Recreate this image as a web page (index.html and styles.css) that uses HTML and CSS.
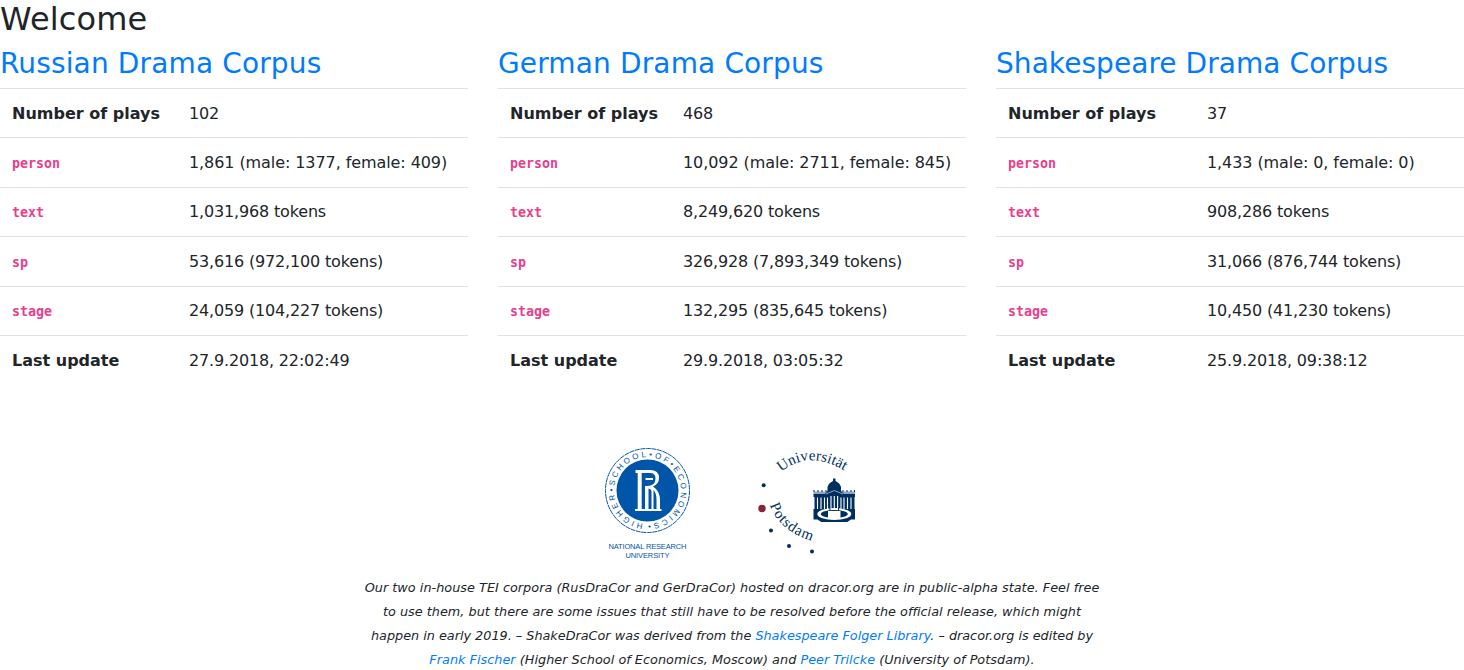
FILE: index.html
```html
<!DOCTYPE html>
<html lang="en">
<head>
<meta charset="utf-8">
<title>DraCor</title>
<link rel="stylesheet" href="styles.css">
</head>
<body>
<h1>Welcome</h1>
<main class="corpora">
  <section class="corpus">
    <h2><a href="#">Russian Drama Corpus</a></h2>
    <table>
      <colgroup><col class="label-russian"><col></colgroup>
      <tr><th>Number of plays</th><td>102</td></tr>
      <tr><th><code>person</code></th><td class="persons">1,861 (male: 1377, female: 409)</td></tr>
      <tr><th><code>text</code></th><td>1,031,968 tokens</td></tr>
      <tr><th><code>sp</code></th><td>53,616 (972,100 tokens)</td></tr>
      <tr><th><code>stage</code></th><td>24,059 (104,227 tokens)</td></tr>
      <tr><th>Last update</th><td>27.9.2018, 22:02:49</td></tr>
    </table>
  </section>
  <section class="corpus">
    <h2><a href="#">German Drama Corpus</a></h2>
    <table>
      <colgroup><col class="label-german"><col></colgroup>
      <tr><th>Number of plays</th><td>468</td></tr>
      <tr><th><code>person</code></th><td class="persons">10,092 (male: 2711, female: 845)</td></tr>
      <tr><th><code>text</code></th><td>8,249,620 tokens</td></tr>
      <tr><th><code>sp</code></th><td>326,928 (7,893,349 tokens)</td></tr>
      <tr><th><code>stage</code></th><td>132,295 (835,645 tokens)</td></tr>
      <tr><th>Last update</th><td>29.9.2018, 03:05:32</td></tr>
    </table>
  </section>
  <section class="corpus">
    <h2 class="long"><a href="#">Shakespeare Drama Corpus</a></h2>
    <table>
      <colgroup><col class="label-shakespeare"><col></colgroup>
      <tr><th>Number of plays</th><td>37</td></tr>
      <tr><th><code>person</code></th><td class="persons">1,433 (male: 0, female: 0)</td></tr>
      <tr><th><code>text</code></th><td>908,286 tokens</td></tr>
      <tr><th><code>sp</code></th><td>31,066 (876,744 tokens)</td></tr>
      <tr><th><code>stage</code></th><td>10,450 (41,230 tokens)</td></tr>
      <tr><th>Last update</th><td>25.9.2018, 09:38:12</td></tr>
    </table>
  </section>
</main>
<footer>
  <div class="logos">
    <svg class="hse" width="105" height="125" viewBox="0 0 105 125">
      <defs><path id="hse-ring" d="M52.5 86.5a36 36 0 1 1 .01 0"/></defs>
      <circle cx="52.5" cy="50.5" r="42" fill="none" stroke="#0055a8" stroke-dasharray="5 .6"/>
      <circle cx="52.5" cy="50.5" r="31" fill="#0055a8"/>
      <text class="ring" dy="2.6"><textPath href="#hse-ring" startOffset="5" textLength="220">HIGHER•SCHOOL•OF•ECONOMICS•</textPath></text>
      <g fill="#fff">
        <path d="M40.500 30H55Q64 30 64 38Q64 44 58 46.500Q65 51 65 60V69H66.500V71H40V69H42.700V33H40.500Z"/>
      </g>
      <g fill="#0055a8">
        <path d="M46.700 33H55Q60.500 33 60.500 38.500Q60.500 46 52 46H50V69H46.700ZM53.500 48.500Q56 48.500 56.500 51V69H53.500ZM58.500 50Q61.500 53 61.500 60V69H58.500Z"/>
      </g>
      <path fill="#fff" d="M50.500 38H58V40H50.500Z"/>
      <text class="name" x="13.500" y="108.500" textLength="78">NATIONAL RESEARCH</text>
      <text class="name" x="30.500" y="118" textLength="44">UNIVERSITY</text>
    </svg>
    <svg class="potsdam" width="115" height="115" viewBox="0 0 115 115">
      <defs>
        <path id="up-top" d="M31 27Q60 3 98 28"/>
        <path id="up-low" d="M20 60Q29 87 66 97"/>
      </defs>
      <text class="up"><textPath href="#up-top" textLength="68">Universität</textPath></text>
      <text class="up"><textPath href="#up-low" textLength="57">Potsdam</textPath></text>
      <g fill="#002f5f"><circle cx="13.700" cy="40.300" r="2"/><circle cx="21" cy="85.500" r="2"/><circle cx="39" cy="101" r="2"/><circle cx="62" cy="106.500" r="2"/></g>
      <circle cx="12" cy="63.500" r="3.700" fill="#8b2338"/>
      <path fill="#8fa5bd" d="M63.500 46.500H105V49H63.500Z"/>
      <path fill="none" stroke="#002f5f" d="M64 45v2M68 45v2M72 45v2M76 45v2M93 45v2M97 45v2M101 45v2M104.500 45v2"/>
      <path fill="#002f5f" d="M77.500 46V42Q78.500 38 83 36V33.500H85.500V36Q90 38 91 42V46L94 49H105V52H104.500V64H105V77H63.500V64H64.500V52H63.500V49H75Z"/>
      <path fill="none" stroke="#fff" stroke-width="1.100" d="M67.500 52.500V64M71 52.500V64M74.500 52.500V64M77.500 52.500V64M81 51V64M84.300 51V64M87.600 51V64M91 52.500V64M94 52.500V64M97.500 52.500V64M101 52.500V64"/>
      <path fill="none" stroke="#8fa5bd" d="M76 49L84.300 45.500L93 49"/>
      <ellipse cx="84.300" cy="69" rx="17" ry="6" fill="#fff"/>
      <ellipse cx="84.300" cy="69" rx="13.500" ry="4" fill="#002f5f"/>
      <path fill="#fff" d="M78 66H90.500V73H78Z"/>
      <path fill="#002f5f" d="M79.500 63H80.500V66H79.500ZM88 63H89V66H88Z"/>
      <path fill="#fff" d="M63 74.500H67.500L72 77.500H63ZM105.500 74.500H101L96.500 77.500H105.500Z"/>
    </svg>
  </div>
  <p class="note">Our two in-house TEI corpora (RusDraCor and GerDraCor) hosted on dracor.org are in public-alpha state. Feel free to use them, but there are some issues that still have to be resolved before the official release, which might <span class="credit">happen in early 2019. – ShakeDraCor was derived from the <a href="#">Shakespeare Folger Library</a>. – dracor.org is edited by</span> <a href="#">Frank Fischer</a> (Higher School of Economics, Moscow) and <a href="#">Peer Trilcke</a> (University of Potsdam).</p>
</footer>
</body>
</html>
```
FILE: styles.css
```css
* { box-sizing: border-box; }
body { margin: 0; overflow: hidden; background: #fff; color: #212529; font: 16px/1.5 "DejaVu Sans", sans-serif; }
h1, h2 { margin: 0 0 8px; font-weight: 400; line-height: 1.2; }
h1 { font-size: 32px; letter-spacing: .15px; }
h2 { padding-top: .6px; margin-bottom: 7.400px; font-size: 28px; letter-spacing: .14px; }
.long { letter-spacing: .06px; }
a { color: #007bff; text-decoration: none; }
.corpora { display: grid; grid-template-columns: repeat(3, 468px); gap: 30px; }
table { width: 100%; table-layout: fixed; border-collapse: collapse; }
th, td { height: 49.5px; padding: 12.500px 12px 12px; text-align: left; vertical-align: top; border-top: 1px solid #dee2e6; white-space: nowrap; }
tr:first-child > * { padding-top: 13px; padding-bottom: 11.500px; }
td { letter-spacing: -.16px; }
.persons { letter-spacing: -.08px; }
.label-russian { width: 177px; }
.label-german { width: 173px; }
.label-shakespeare { width: 199px; }
code { font: 700 13.300px "DejaVu Sans Mono", monospace; color: #e83e8c; }
.logos { display: flex; gap: 50px; padding-left: 595px; margin-top: 55px; height: 125px; }
.potsdam { margin-top: 5px; }
.ring { font: 8px "Liberation Sans", sans-serif; fill: #0055a8; }
.name { font: 7.500px "Liberation Sans", sans-serif; fill: #0055a8; }
.up { font: 15px "Liberation Serif", serif; fill: #002f5f; }
.note { width: 742px; margin: 11px auto 0; text-align: center; font-size: 12.800px; line-height: 24px; font-style: italic; letter-spacing: .03px; }
.credit { letter-spacing: 0; }
```
